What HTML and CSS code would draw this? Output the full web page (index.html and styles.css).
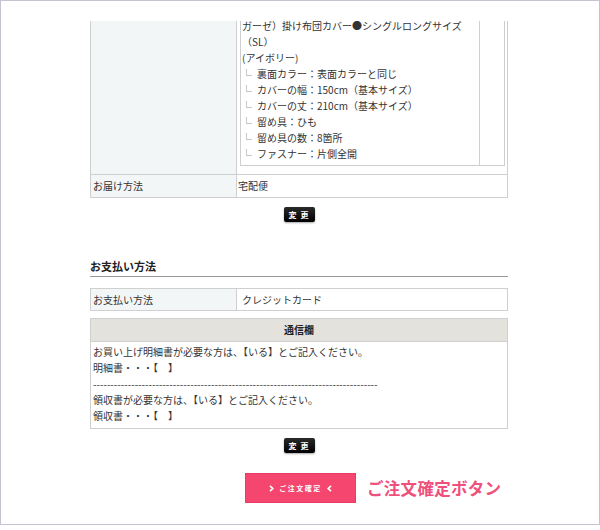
FILE: index.html
```html
<!DOCTYPE html>
<html lang="ja">
<head>
<meta charset="utf-8">
<title>ご注文確認</title>
<link rel="stylesheet" href="styles.css">
</head>
<body>
<div class="frame">
  <div class="content">
    <table class="tbl tbl-first">
      <colgroup><col class="col-label"><col></colgroup>
      <tr class="row-top">
        <td class="label"></td>
        <td class="val-items">
          <table class="inner">
            <tr>
              <td class="desc">
                <div class="ln ln-first">ガーゼ）掛け布団カバー●シングルロングサイズ</div>
                <div class="ln">（SL）</div>
                <div class="ln">(アイボリー)</div>
                <div class="ln opt"><span class="tree"></span>裏面カラー：表面カラーと同じ</div>
                <div class="ln opt"><span class="tree"></span>カバーの幅：150cm（基本サイズ）</div>
                <div class="ln opt"><span class="tree"></span>カバーの丈：210cm（基本サイズ）</div>
                <div class="ln opt"><span class="tree"></span>留め具：ひも</div>
                <div class="ln opt"><span class="tree"></span>留め具の数：8箇所</div>
                <div class="ln opt"><span class="tree"></span>ファスナー：片側全開</div>
              </td>
              <td class="blank"></td>
            </tr>
          </table>
        </td>
      </tr>
      <tr>
        <td class="label">お届け方法</td>
        <td class="val">宅配便</td>
      </tr>
    </table>

    <div class="btn-row"><span class="btn-change">変 更</span></div>

    <h2 class="sec-title">お支払い方法</h2>

    <table class="tbl tbl-pay">
      <colgroup><col class="col-label"><col></colgroup>
      <tr>
        <td class="label">お支払い方法</td>
        <td class="val val-pay">クレジットカード</td>
      </tr>
    </table>

    <table class="tbl tbl-msg">
      <tr><th class="msg-head">通信欄</th></tr>
      <tr>
        <td class="msg-body">
          <div class="ln">お買い上げ明細書が必要な方は、【いる】とご記入ください。</div>
          <div class="ln">明細書・・・【　】</div>
          <div class="ln">----------------------------------------------------------------------------------</div>
          <div class="ln">領収書が必要な方は、【いる】とご記入ください。</div>
          <div class="ln">領収書・・・【　】</div>
        </td>
      </tr>
    </table>

    <div class="btn-row btn-row2"><span class="btn-change">変 更</span></div>

    <div class="confirm-row">
      <span class="btn-confirm">
        <svg class="chev" width="5" height="7" viewBox="0 0 5 7"><path d="M1 0.8 L3.8 3.5 L1 6.2" fill="none" stroke="#fff" stroke-width="1.7"/></svg>
        <span class="confirm-text">ご注文確定</span>
        <svg class="chev" width="5" height="7" viewBox="0 0 5 7"><path d="M4 0.8 L1.2 3.5 L4 6.2" fill="none" stroke="#fff" stroke-width="1.7"/></svg>
      </span>
      <span class="confirm-label">ご注文確定ボタン</span>
    </div>
  </div>
</div>
</body>
</html>
```

FILE: styles.css
```css
html, body {
  margin: 0;
  padding: 0;
  background: #fff;
}
body {
  font-family: "Noto Sans CJK JP", "DejaVu Sans", sans-serif;
  font-size: 10px;
  line-height: 16px;
  color: #333;
}
.frame {
  width: 600px;
  height: 525px;
  box-sizing: border-box;
  border: 1px solid #c4c3d1;
  overflow: hidden;
  background: #fff;
}
.content {
  margin-left: 89px;
  width: 418px;
}
.tbl {
  width: 418px;
  border-collapse: collapse;
  table-layout: fixed;
}
.tbl td, .tbl th {
  border: 1px solid #cfcfcf;
  padding: 0;
  vertical-align: top;
  text-align: left;
}
.col-label {
  width: 146px;
}
.tbl-first {
  margin-top: 20px;
}
.tbl .row-top > td {
  border-top: none;
}
.tbl .label {
  background: #f3f6f7;
  padding: 3px 1px 3px 2px;
}
.tbl .val {
  padding: 3px 1px 3px 1px;
}
.tbl .val-pay {
  padding-left: 5px;
}
.tbl-pay .label, .tbl-pay .val {
  padding-top: 3px;
  padding-bottom: 2px;
}
.tbl .val-items {
  padding: 0 2px 8px 3px;
}
.inner {
  width: 100%;
  border-collapse: collapse;
}
.inner td {
  border: 1px solid #cfcfcf;
  border-top: none;
  padding: 0;
  vertical-align: top;
}
.inner .desc {
  padding: 0 1px 3px 1px;
}
.inner .blank {
  width: 24px;
}
.ln {
  white-space: nowrap;
}
.ln-first {
  line-height: 10px;
  margin-bottom: 3px;
}
.opt {
  display: flex;
  align-items: center;
}
.tree {
  display: inline-block;
  width: 5px;
  height: 6px;
  margin: 0 5px 4px 4px;
  border-left: 1px solid #c8c8c8;
  border-bottom: 1px solid #c8c8c8;
}
.btn-row {
  display: flex;
  justify-content: center;
  margin-top: 9px;
}
.btn-change {
  display: inline-block;
  width: 31px;
  height: 15px;
  box-sizing: border-box;
  background: linear-gradient(#2a2a2a, #000);
  border-radius: 2px;
  box-shadow: 0 1px 2px rgba(0,0,0,0.35);
  color: #fff;
  font-size: 8px;
  font-weight: bold;
  line-height: 15px;
  text-align: center;
  letter-spacing: 1px;
}
.sec-title {
  margin: 36px 0 0 0;
  padding: 0 0 2px 0;
  font-size: 11px;
  line-height: 16px;
  font-weight: bold;
  color: #222;
  border-bottom: 1px solid #9a9a9a;
}
.tbl-pay {
  margin-top: 11px;
}
.tbl-msg {
  margin-top: 7px;
}
.tbl .msg-head {
  background: #e3e2dd;
  text-align: center;
  font-weight: bold;
  color: #222;
  padding: 3px 0;
}
.tbl .msg-body {
  padding: 2px 2px 4px 2px;
}
.btn-row2 {
  margin-top: 9px;
}
.confirm-row {
  display: flex;
  align-items: center;
  margin-top: 20px;
  margin-left: 155px;
  gap: 11px;
}
.btn-confirm {
  display: inline-flex;
  align-items: center;
  justify-content: center;
  gap: 5px;
  width: 111px;
  height: 30px;
  box-sizing: border-box;
  background: #f4466f;
  border: 1px dotted #e0305d;
  color: #fff;
}
.confirm-text {
  font-size: 7px;
  font-weight: bold;
  letter-spacing: 1.5px;
  line-height: 10px;
}
.chev {
  display: block;
}
.confirm-label {
  font-size: 16.5px;
  font-weight: bold;
  line-height: 20px;
  color: #ef4f7b;
  letter-spacing: 0.3px;
}
```
